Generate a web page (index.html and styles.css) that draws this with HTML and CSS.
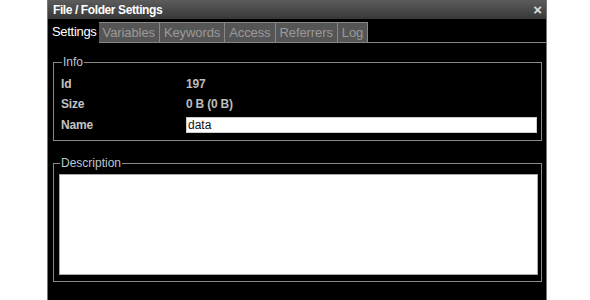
FILE: index.html
```html
<!DOCTYPE html>
<html>
<head>
<meta charset="utf-8">
<link rel="stylesheet" href="styles.css">
</head>
<body>
<div class="window">
  <div class="titlebar">
    <span class="title">File / Folder Settings</span>
    <span class="close">×</span>
  </div>
  <div class="tabs">
    <div class="tab active">Settings</div>
    <div class="tab">Variables</div>
    <div class="tab">Keywords</div>
    <div class="tab">Access</div>
    <div class="tab">Referrers</div>
    <div class="tab">Log</div>
    <div class="tab-fill"></div>
  </div>
  <fieldset class="group info">
    <legend>Info</legend>
    <div class="grid">
      <div class="label">Id</div><div class="value">197</div>
      <div class="label">Size</div><div class="value">0 B (0 B)</div>
      <div class="label">Name</div><div class="value"><input class="name-input" type="text" value="data"></div>
    </div>
  </fieldset>
  <fieldset class="group desc">
    <legend>Description</legend>
    <textarea class="desc-area"></textarea>
  </fieldset>
</div>
</body>
</html>
```
FILE: styles.css
```css
html, body {
  margin: 0;
  padding: 0;
  background: #fff;
}
body {
  font-family: "Liberation Sans", Arial, sans-serif;
  font-size: 12px;
}
.window {
  margin-left: 47px;
  width: 498px;
  height: 300px;
  background: #000;
  border-left: 1px solid #777;
  border-right: 1px solid #777;
  display: flex;
  flex-direction: column;
}
.titlebar {
  height: 19px;
  background: linear-gradient(#5c5c5c, #383838);
  display: flex;
  align-items: center;
  justify-content: space-between;
  padding: 0 4px 0 5px;
  color: #fff;
  font-weight: bold;
}
.title {
  font-size: 12px;
  letter-spacing: -0.4px;
}
.close {
  font-size: 15px;
  color: #ddd;
  line-height: 1;
}
.tabs {
  display: flex;
  margin-top: 3px;
  height: 21px;
}
.tab {
  box-sizing: border-box;
  height: 21px;
  padding: 2px 4px 0 4px;
  background: #555;
  color: #9a9a9a;
  border: 1px solid #888;
  border-left: none;
  font-size: 13px;
  letter-spacing: -0.1px;
}
.tab.active {
  background: #000;
  color: #fff;
  border: none;
  padding: 2px 2px 0 4px;
  letter-spacing: -0.3px;
}
.tab-fill {
  flex: 1;
  border-bottom: 1px solid #888;
}
.group {
  margin: 12px 4px 0 5px;
  padding: 0;
  border: 1px solid #8a8a8a;
}
.group legend {
  color: #bcc6d0;
  font-size: 12px;
  padding: 0 1px;
  margin-left: 1px;
  line-height: 14px;
}
.info {
  padding: 5px 4px 4px 7px;
}
.grid {
  display: grid;
  grid-template-columns: 125px 1fr;
  grid-template-rows: 20px 20px 22px;
  align-items: center;
  color: #c4c4c4;
  font-weight: bold;
  letter-spacing: -0.2px;
}
.value {
  color: #bdbdbd;
}
.name-input {
  display: block;
  box-sizing: border-box;
  width: 100%;
  height: 16px;
  border: 1px solid #ccc;
  background: #fff;
  font-family: "Liberation Sans", Arial, sans-serif;
  font-size: 12px;
  padding: 0 1px;
  color: #111;
  outline: none;
}
.desc {
  margin-top: 15px;
  padding: 4px 3px 6px 5px;
}
.desc-area {
  display: block;
  box-sizing: border-box;
  width: 100%;
  height: 101px;
  resize: none;
  background: #fff;
  border: 1px solid #aaa;
  margin: 0;
}
```
